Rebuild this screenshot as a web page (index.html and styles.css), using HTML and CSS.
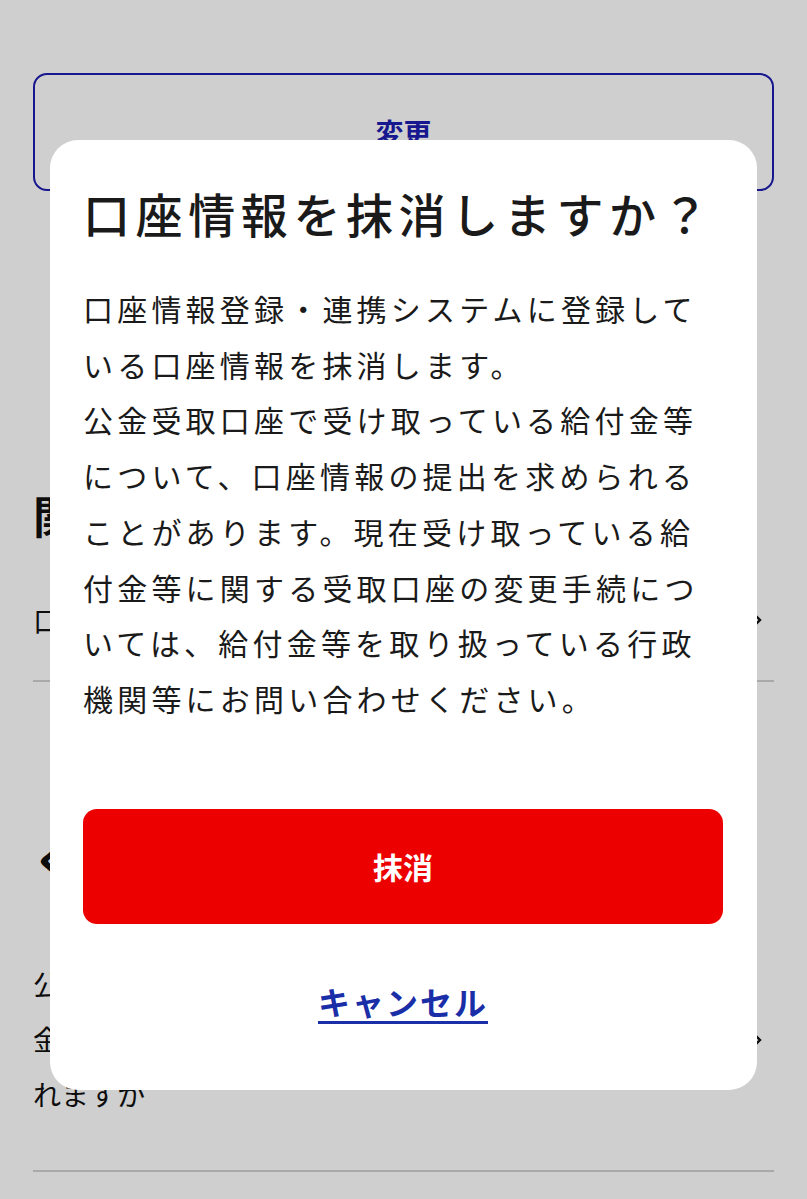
FILE: index.html
```html
<!DOCTYPE html>
<html lang="ja">
<head>
  <meta charset="UTF-8">
  <meta name="viewport" content="width=device-width, initial-scale=1.0">
  <title>口座情報の抹消</title>
  <link rel="stylesheet" href="styles.css">
</head>
<body>
  <main class="page">
    <button class="change-btn">変更</button>

    <section class="related">
      <h2 class="section-title">関連サービス</h2>
      <a class="link-row" href="#">
        <span>口座情報の確認・変更</span>
        <svg class="chev" viewBox="0 0 10 16" width="10" height="16"><path d="M2 2l6 6-6 6" fill="none" stroke="#111" stroke-width="2.4"/></svg>
      </a>
    </section>

    <section class="faq">
      <h2 class="section-title">くわしく知る</h2>
      <a class="faq-row" href="#">
        <span>公金受取口座を登録すると、どのような給付<br>金等を受け取ることができ、いつから受け取<br>れますか</span>
        <svg class="chev" viewBox="0 0 10 16" width="10" height="16"><path d="M2 2l6 6-6 6" fill="none" stroke="#111" stroke-width="2.4"/></svg>
      </a>
    </section>
  </main>

  <!-- Confirm dialog -->
  <div class="overlay">
    <div class="dialog" role="dialog" aria-modal="true">
      <h1 class="dialog-title">口座情報を抹消しますか？</h1>
      <p class="dialog-text">口座情報登録・連携システムに登録している口座情報を抹消します。<br>公金受取口座で受け取っている給付金等について、口座情報の提出を求められることがあります。現在受け取っている給付金等に関する受取口座の変更手続については、給付金等を取り扱っている行政機関等にお問い合わせください。</p>
      <button class="delete-btn">抹消</button>
      <a class="cancel-link" href="#">キャンセル</a>
    </div>
  </div>
</body>
</html>
```

FILE: styles.css
```css
/* Base */
body {
  margin: 0;
  background: #fff;
  color: #111;
  font-family: "Noto Sans CJK JP", "Noto Sans", sans-serif;
  overflow: hidden;
}

/* Background page */
.page {
  padding: 73px 33px 0;
}
.change-btn {
  display: block;
  width: 100%;
  height: 118px;
  border: 2px solid #1d1db0;
  border-radius: 14px;
  background: #fff;
  color: #1d1db0;
  font-family: inherit;
  font-size: 28px;
  font-weight: 700;
}
.section-title {
  margin: 0;
  font-size: 44px;
  line-height: 60px;
  font-weight: 700;
}
.related {
  margin-top: 294px;
}
.link-row,
.faq-row {
  display: flex;
  justify-content: space-between;
  align-items: center;
  color: #111;
  text-decoration: none;
  font-size: 28px;
  border-bottom: 2px solid #d0d0d0;
}
.link-row {
  line-height: 40px;
  padding-top: 55px;
  padding-bottom: 40px;
}
.faq {
  margin-top: 148px;
}
.faq-row {
  line-height: 55px;
  padding-top: 67px;
  padding-bottom: 48px;
}
.chev {
  flex: none;
  margin-right: 12px;
}

/* Dialog */
.overlay {
  position: fixed;
  inset: 0;
  background: rgba(0, 0, 0, 0.19);
  padding: 140px 0 0 50px;
}
.dialog {
  width: 707px;
  height: 950px;
  box-sizing: border-box;
  background: #fff;
  border-radius: 28px;
  padding: 40px 34px 0 33px;
  display: flex;
  flex-direction: column;
}
.dialog-title {
  margin: 0;
  font-size: 47px;
  line-height: 66px;
  font-weight: 500;
  letter-spacing: 5.6px;
  color: #1a1a1a;
  white-space: nowrap;
}
.dialog-text {
  margin: 35px 0 0;
  font-size: 30px;
  line-height: 55.7px;
  letter-spacing: 4.2px;
  color: #1a1a1a;
}
.delete-btn {
  margin: 82px 0 0;
  height: 115px;
  border: 0;
  border-radius: 14px;
  background: #ec0000;
  color: #fff;
  font-family: inherit;
  font-size: 30px;
  font-weight: 700;
}
.cancel-link {
  align-self: center;
  margin-top: 53px;
  font-size: 32px;
  line-height: 48px;
  font-weight: 700;
  letter-spacing: 2px;
  color: #1a2ea8;
  text-decoration: underline;
  text-underline-offset: 6px;
  text-decoration-thickness: 2.5px;
}
```
